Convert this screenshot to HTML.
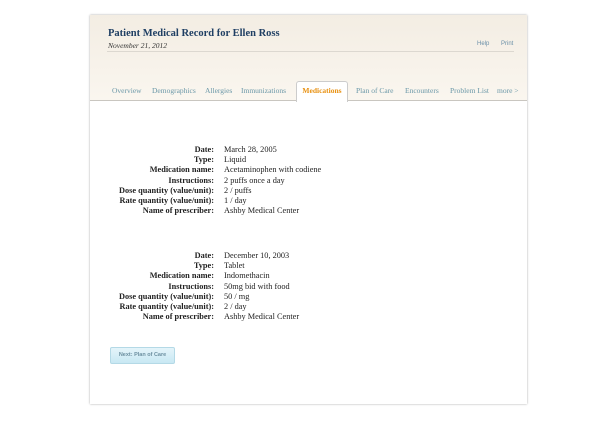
<!DOCTYPE html>
<html><head><style>
body{margin:0;width:615px;height:424px;background:#fff;position:relative;font-family:"Liberation Serif","DejaVu Serif",serif;overflow:hidden}
.card{position:absolute;left:90px;top:15px;width:437px;height:389px;background:#fff;box-shadow:0 0 2px rgba(0,0,0,.35);}
.hdr{position:absolute;left:0;top:0;width:437px;height:85px;background:linear-gradient(#f3ede3,#faf6ef);border-bottom:1px solid #c9c6c0}
.title{position:absolute;left:18px;top:13px;font-weight:bold;font-size:10.5px;color:#1f3f63}
.date{position:absolute;left:18px;top:26px;font-style:italic;font-size:7.5px;color:#333}
.line{position:absolute;left:17px;top:36px;width:407px;height:1px;background:#dcd8d0}
.lk{position:absolute;top:26px;font-family:"Liberation Sans",sans-serif;font-size:6px;color:#6a8fa8}
.tab{position:absolute;top:71px;font-size:7.5px;color:#6b98a8}
.act{position:absolute;left:206px;top:66px;width:50px;height:20px;background:#fff;border:1px solid #ccc;border-bottom:none;border-radius:3px 3px 0 0;font-size:7.5px;font-weight:bold;color:#e8900f;text-align:center;line-height:17px}
.rows{position:absolute;font-size:8.3px;color:#222;line-height:10.2px}
.l{position:absolute;width:124px;text-align:right;font-weight:bold;left:0}
.v{position:absolute;left:134px;white-space:nowrap}
.btn{position:absolute;left:20px;top:332px;width:63px;height:15px;background:linear-gradient(#e4f4fa,#c8e8f3);border:1px solid #b4d9e6;border-radius:2px;font-family:"Liberation Sans",sans-serif;font-size:5.5px;font-weight:bold;color:#6c8fa0;text-align:center;line-height:15px}
</style></head><body>
<div class="card">
<div class="hdr">
<div class="title">Patient Medical Record for Ellen Ross</div>
<div class="date">November 21, 2012</div>
<div class="lk" style="left:387px">Help</div><div class="lk" style="left:411px">Print</div>
<div class="line"></div>
<div class="tab" style="left:22px">Overview</div>
<div class="tab" style="left:62px">Demographics</div>
<div class="tab" style="left:115px">Allergies</div>
<div class="tab" style="left:151px">Immunizations</div>
<div class="act">Medications</div>
<div class="tab" style="left:266px">Plan of Care</div>
<div class="tab" style="left:315px">Encounters</div>
<div class="tab" style="left:360px">Problem List</div>
<div class="tab" style="left:407px">more &gt;</div>
</div>
<div class="rows" style="left:0;top:130px">
<div class="l" style="top:0">Date:</div><div class="v" style="top:0">March 28, 2005</div>
<div class="l" style="top:10.2px">Type:</div><div class="v" style="top:10.2px">Liquid</div>
<div class="l" style="top:20.4px">Medication name:</div><div class="v" style="top:20.4px">Acetaminophen with codiene</div>
<div class="l" style="top:30.6px">Instructions:</div><div class="v" style="top:30.6px">2 puffs once a day</div>
<div class="l" style="top:40.8px">Dose quantity (value/unit):</div><div class="v" style="top:40.8px">2 / puffs</div>
<div class="l" style="top:51px">Rate quantity (value/unit):</div><div class="v" style="top:51px">1 / day</div>
<div class="l" style="top:61.2px">Name of prescriber:</div><div class="v" style="top:61.2px">Ashby Medical Center</div>
</div>
<div class="rows" style="left:0;top:236px">
<div class="l" style="top:0">Date:</div><div class="v" style="top:0">December 10, 2003</div>
<div class="l" style="top:10.2px">Type:</div><div class="v" style="top:10.2px">Tablet</div>
<div class="l" style="top:20.4px">Medication name:</div><div class="v" style="top:20.4px">Indomethacin</div>
<div class="l" style="top:30.6px">Instructions:</div><div class="v" style="top:30.6px">50mg bid with food</div>
<div class="l" style="top:40.8px">Dose quantity (value/unit):</div><div class="v" style="top:40.8px">50 / mg</div>
<div class="l" style="top:51px">Rate quantity (value/unit):</div><div class="v" style="top:51px">2 / day</div>
<div class="l" style="top:61.2px">Name of prescriber:</div><div class="v" style="top:61.2px">Ashby Medical Center</div>
</div>
<div class="btn">Next: Plan of Care</div>
</div>
</body></html>
